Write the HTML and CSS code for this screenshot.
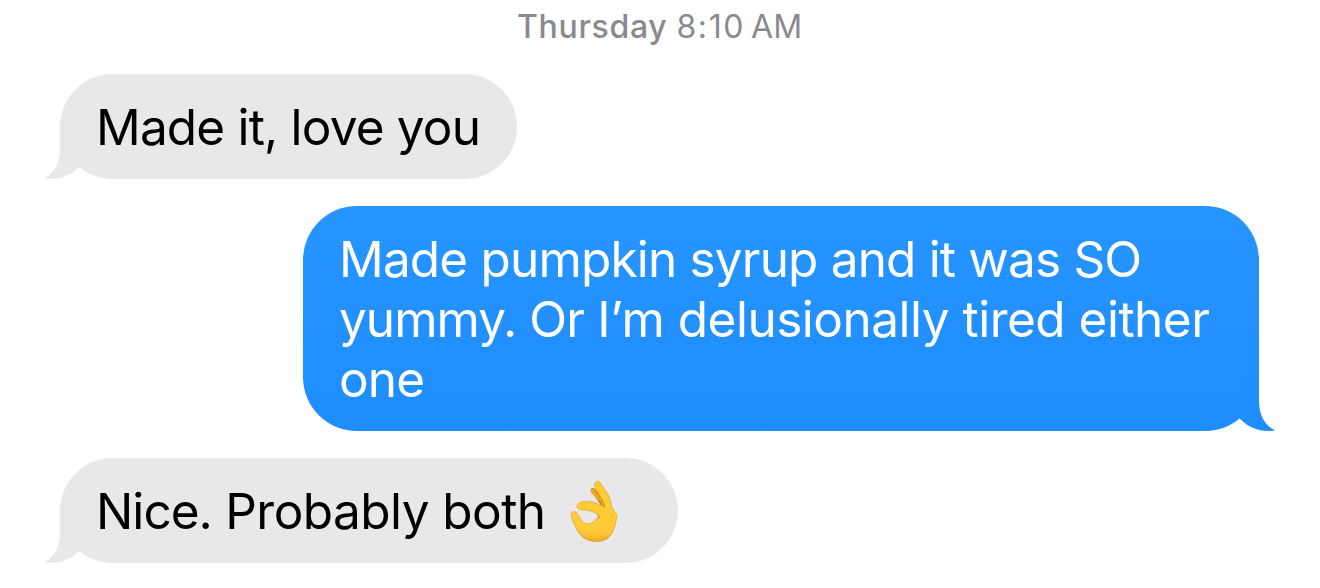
FILE: index.html
```
<!DOCTYPE html>
<html lang="en">
<head>
  <meta charset="UTF-8" />
  <meta name="viewport" content="width=device-width, initial-scale=1.0" />
  <title>Messages</title>
  <link rel="stylesheet" href="styles.css">
</head>
<body>
  <main class="chat">
    <div class="timestamp"><span class="day">Thursday</span> <span class="time">8:10</span> <span class="ampm">AM</span></div>

    <div class="bubble received first">
      <p class="line">Made it, love you</p>
      <svg class="tail" viewBox="0 0 36 54"><path d="M16 0V24C16 38 10 49 0 53.2C13 56 26 51 35 42V0Z"/></svg>
    </div>

    <div class="bubble sent">
      <p class="line">Made pumpkin syrup and it was SO</p>
      <p class="line sent-b"><span class="tight">yummy. Or</span> I’m delusionally tired either</p>
      <p class="line sent-c">one</p>
      <svg class="tail" viewBox="0 0 36 54"><path d="M16 0V24C16 38 10 49 0 53.2C13 56 26 51 35 42V0Z"/></svg>
    </div>

    <div class="bubble received last">
      <p class="line"><span class="tight">Nice.</span> Probably both</p>
      <!-- OK hand -->
      <svg class="emoji" viewBox="40 25 150 195">
        <defs>
          <linearGradient id="skin" x1="0" y1="0" x2="0" y2="1">
            <stop offset="0" stop-color="#ffca32"/>
            <stop offset=".8" stop-color="#ffcb38"/>
            <stop offset="1" stop-color="#f3b02a"/>
          </linearGradient>
        </defs>
        <path d="M106 65C101 51 115 48 121 59L148 107L135 103L117 76Z" fill="#c97d12"/>
        <path d="M107 66C102 53 113 50 119 60L138 94L127 88Z" fill="#eba823"/>
        <path d="M118 49C112 33 128 25 136 39L158 73C165 85 165 99 170 113L184 133C183 148 179 163 173 179C164 203 148 212 125 213C94 213 77 199 65 180C58 168 51 150 47 136C43 120 60 119 66 130L78 151C92 168 122 157 128 134C117 122 100 119 75 117C57 114 62 96 79 94C101 87 121 96 142 108C137 87 125 69 118 49Z" fill="url(#skin)" stroke="#e29b25" stroke-width="2"/>
        <path d="M123 62C132 79 145 90 146 111" fill="none" stroke="#c97d12" stroke-width="3"/>
        <path d="M125 131C131 135 132 139 129 143" fill="none" stroke="#cf8519" stroke-width="3"/>
        <path d="M69 181C87 214 145 220 165 187" fill="none" stroke="#dc921c" stroke-width="3" opacity=".3"/>
      </svg>
      <svg class="tail" viewBox="0 0 36 54"><path d="M16 0V24C16 38 10 49 0 53.2C13 56 26 51 35 42V0Z"/></svg>
    </div>
  </main>
</body>
</html>
```
FILE: styles.css
```
* {
  margin: 0;
  padding: 0;
  box-sizing: border-box;
}
body {
  background-color: #fff;
  font-family: Inter, "Liberation Sans", sans-serif;
  color: #000;
  overflow: hidden;
}
.chat {
  display: flex;
  flex-direction: column;
  align-items: flex-start;
  gap: 27px;
  width: 1320px;
  height: 588px;
  padding: 7px 61px 0 60px;
}
.timestamp {
  align-self: center;
  height: 40px;
  line-height: 40px;
  font-size: 32px;
  color: #8a8a8e;
  white-space: nowrap;
}
.day {
  font-weight: 500;
  letter-spacing: 0.7px;
}
.time {
  letter-spacing: 1.6px;
}
.ampm {
  margin-left: -3px;
}
.bubble {
  position: relative;
  padding: 23px 37px 22px 36px;
  border-radius: 52.5px;
}
.line {
  font-size: 49.5px;
  line-height: 60px;
  letter-spacing: -0.82px;
  white-space: nowrap;
}
.received {
  height: 105px;
  background-color: #e8e8ea;
  color: #000;
}
.first {
  width: 457px;
}
.last {
  display: flex;
  width: 618px;
}
.last .line {
  letter-spacing: -0.55px;
}
.sent {
  align-self: flex-end;
  width: 956px;
  height: 225px;
  border-radius: 54px;
  background: linear-gradient(#2795ff, #1e8dff);
  color: #fff;
}
.sent-b {
  letter-spacing: -0.5px;
}
.sent-c {
  letter-spacing: -0.9px;
}
.tight {
  letter-spacing: -0.95px;
}
.tail {
  position: absolute;
  left: -16px;
  bottom: 0;
  width: 36px;
  height: 54px;
  fill: #e8e8ea;
}
.sent .tail {
  left: auto;
  right: -16px;
  transform: scaleX(-1);
  fill: #1e8eff;
}
.emoji {
  width: 50px;
  height: 65px;
  margin: -2px 0 0 23px;
}
```
